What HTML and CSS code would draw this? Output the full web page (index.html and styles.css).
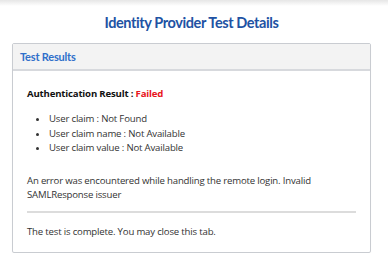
FILE: index.html
```html
<!DOCTYPE html>
<html>
<head>
<meta charset="utf-8">
<link rel="stylesheet" href="styles.css">
</head>
<body>
<div class="topshade"></div>
<div class="page">
  <h1 class="title">Identity Provider Test Details</h1>
  <div class="card">
    <div class="card-header">Test Results</div>
    <div class="card-body">
      <p class="result"><b>Authentication Result : </b><span class="failed">Failed</span></p>
      <ul class="claims">
        <li>User claim : Not Found</li>
        <li>User claim name : Not Available</li>
        <li>User claim value : Not Available</li>
      </ul>
      <p class="error">An error was encountered while handling the remote login. Invalid SAMLResponse issuer</p>
      <hr class="sep">
      <p class="done">The test is complete. You may close this tab.</p>
    </div>
  </div>
</div>
</body>
</html>
```
FILE: styles.css
```css
html, body {
  margin: 0;
  padding: 0;
  background: #fff;
}
.topshade {
  height: 6px;
  background: linear-gradient(#e6e6e6, #ffffff);
}
.page {
  padding: 0 17px 0 12px;
}
.title {
  margin: 7px 0 0 0;
  text-align: center;
  font-family: Lato, sans-serif;
  font-weight: 700;
  font-size: 14.5px;
  letter-spacing: -0.4px;
  line-height: 20px;
  color: #2152a3;
}
.card {
  margin-top: 10px;
  border: 1px solid #c9ccd1;
  border-radius: 2px;
  box-shadow: 0 1px 1px rgba(0,0,0,0.06);
}
.card-header {
  background: #f3f3f3;
  border-bottom: 2px solid #d7d9dd;
  height: 25px;
  line-height: 25px;
  padding-left: 7px;
  font-family: Lato, sans-serif;
  font-weight: 700;
  font-size: 11px;
  letter-spacing: -0.2px;
  color: #2f6fca;
}
.card-body {
  padding: 16px 14px 13px 14px;
  font-family: "Open Sans", sans-serif;
  font-size: 9.6px;
  letter-spacing: -0.18px;
  line-height: 14px;
  color: #333;
}
.card-body p {
  margin: 0;
}
.result b {
  font-weight: 700;
  color: #111;
}
.failed {
  color: #e8141c;
  font-weight: 700;
}
.claims {
  margin: 11px 0 0 0;
  padding-left: 22px;
  line-height: 14.5px;
}
.error {
  margin-top: 18px !important;
}
.sep {
  margin: 9px 0 0 0;
  border: 0;
  border-top: 2px solid #dcdcdc;
}
.done {
  margin-top: 12px !important;
}
```
